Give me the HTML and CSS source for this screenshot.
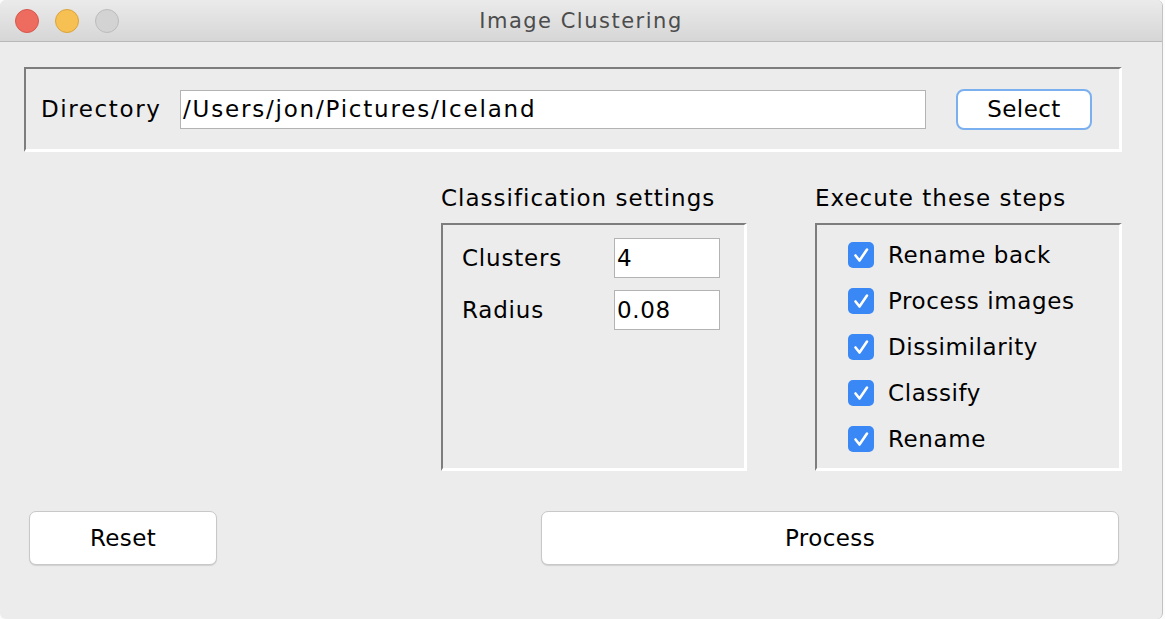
FILE: index.html
```
<!DOCTYPE html>
<html lang="en">
<head>
<meta charset="utf-8">
<title>Image Clustering</title>
<link rel="stylesheet" href="styles.css">
</head>
<body>
<div class="window">
  <div class="titlebar">
    <div class="lights">
      <span class="light close"></span>
      <span class="light min"></span>
      <span class="light max"></span>
    </div>
    <div class="title">Image Clustering</div>
    <div></div>
  </div>
  <div class="content">
    <div class="dir-panel">
      <span class="dir-label">Directory</span>
      <div class="field dir-field">/Users/jon/Pictures/Iceland</div>
      <button class="btn select-btn">Select</button>
    </div>
    <div class="middle">
      <section class="group settings">
        <div class="group-title">Classification settings</div>
        <div class="group-box settings-box">
          <div class="setting-row"><span class="setting-label">Clusters</span><div class="field small-field">4</div></div>
          <div class="setting-row"><span class="setting-label">Radius</span><div class="field small-field">0.08</div></div>
        </div>
      </section>
      <section class="group steps">
        <div class="group-title">Execute these steps</div>
        <div class="group-box steps-box">
          <div class="step"><span class="check"><svg viewBox="0 0 26 26" width="26" height="26"><path d="M7.5 13.5 L11.5 18.5 L19 7.5" fill="none" stroke="#fff" stroke-width="2.6" stroke-linecap="round" stroke-linejoin="round"/></svg></span><span>Rename back</span></div>
          <div class="step"><span class="check"><svg viewBox="0 0 26 26" width="26" height="26"><path d="M7.5 13.5 L11.5 18.5 L19 7.5" fill="none" stroke="#fff" stroke-width="2.6" stroke-linecap="round" stroke-linejoin="round"/></svg></span><span>Process images</span></div>
          <div class="step"><span class="check"><svg viewBox="0 0 26 26" width="26" height="26"><path d="M7.5 13.5 L11.5 18.5 L19 7.5" fill="none" stroke="#fff" stroke-width="2.6" stroke-linecap="round" stroke-linejoin="round"/></svg></span><span>Dissimilarity</span></div>
          <div class="step"><span class="check"><svg viewBox="0 0 26 26" width="26" height="26"><path d="M7.5 13.5 L11.5 18.5 L19 7.5" fill="none" stroke="#fff" stroke-width="2.6" stroke-linecap="round" stroke-linejoin="round"/></svg></span><span>Classify</span></div>
          <div class="step"><span class="check"><svg viewBox="0 0 26 26" width="26" height="26"><path d="M7.5 13.5 L11.5 18.5 L19 7.5" fill="none" stroke="#fff" stroke-width="2.6" stroke-linecap="round" stroke-linejoin="round"/></svg></span><span>Rename</span></div>
        </div>
      </section>
    </div>
    <div class="actions">
      <button class="btn reset-btn">Reset</button>
      <button class="btn process-btn">Process</button>
    </div>
  </div>
</div>
</body>
</html>
```
FILE: styles.css
```
* { box-sizing: border-box; }
body {
  margin: 0;
  background: #fbfbfb;
  font-family: "DejaVu Sans", sans-serif;
  color: #000;
}
.window {
  width: 1163px;
  height: 619px;
  background: #ececec;
  border-right: 1px solid #c2c2c2;
  border-radius: 6px;
  overflow: hidden;
}
.titlebar {
  height: 42px;
  background: linear-gradient(#ebebeb, #d6d6d6);
  border-bottom: 1px solid #b8b8b8;
  display: grid;
  grid-template-columns: 1fr auto 1fr;
  align-items: center;
}
.lights {
  display: flex;
  gap: 16px;
  padding-left: 15px;
}
.light {
  width: 24px;
  height: 24px;
  border-radius: 50%;
}
.close { background: #ee6b60; border: 1px solid #d6574c; }
.min { background: #f6c052; border: 1px solid #dba33c; }
.max { background: #d3d3d3; border: 1px solid #bcbcbc; }
.title {
  font-size: 21px;
  letter-spacing: 1.5px;
  color: #4c4c4c;
}
.content {
  padding: 25px 0 0 24px;
}
.dir-panel {
  width: 1098px;
  height: 85px;
  border-style: solid;
  border-width: 2px 3px 3px 2px;
  border-color: #7d7d7d #fff #fff #7d7d7d;
  display: flex;
  align-items: center;
  padding-left: 15px;
}
.dir-label {
  width: 139px;
  font-size: 23px;
  letter-spacing: 1.6px;
}
.field {
  background: #fff;
  border: 1px solid #b3b3b3;
  font-size: 23px;
  display: flex;
  align-items: center;
  padding-left: 2px;
}
.dir-field {
  width: 746px;
  height: 39px;
  letter-spacing: 1.8px;
}
.btn {
  font-family: inherit;
  font-size: 23px;
  letter-spacing: 0.4px;
  color: #000;
  background: #fff;
  border: 1px solid #c8c8c8;
  border-radius: 7px;
  box-shadow: 0 1px 1px rgba(0, 0, 0, 0.12);
  padding: 0;
}
.select-btn {
  margin-left: 30px;
  width: 136px;
  height: 41px;
  border: 2px solid #7aaff0;
  border-radius: 8px;
  box-shadow: none;
}
.middle {
  display: flex;
  justify-content: flex-end;
  gap: 68px;
  width: 1098px;
  margin-top: 32px;
}
.settings { width: 306px; }
.steps { width: 307px; }
.group-title {
  font-size: 23px;
  letter-spacing: 1px;
  line-height: 28px;
  margin-bottom: 11px;
}
.group-box {
  height: 248px;
  border-style: solid;
  border-width: 2px 3px 3px 2px;
  border-color: #7d7d7d #fff #fff #7d7d7d;
}
.settings-box {
  padding: 13px 0 0 19px;
  display: flex;
  flex-direction: column;
  gap: 12px;
}
.setting-row {
  display: flex;
  align-items: center;
}
.setting-label {
  width: 152px;
  font-size: 23px;
  letter-spacing: 0.8px;
}
.small-field {
  width: 106px;
  height: 40px;
  letter-spacing: 0.6px;
}
.steps-box {
  padding: 7px 0 0 31px;
}
.step {
  display: flex;
  align-items: center;
  height: 46px;
  gap: 14px;
  font-size: 23px;
  letter-spacing: 0.6px;
}
.check {
  width: 26px;
  height: 26px;
  border-radius: 5px;
  background: #3a87f6;
  display: flex;
}
.actions {
  display: flex;
  justify-content: space-between;
  width: 1098px;
  padding: 0 3px 0 5px;
  margin-top: 40px;
}
.reset-btn { width: 188px; height: 54px; }
.process-btn { width: 578px; height: 54px; }
```
